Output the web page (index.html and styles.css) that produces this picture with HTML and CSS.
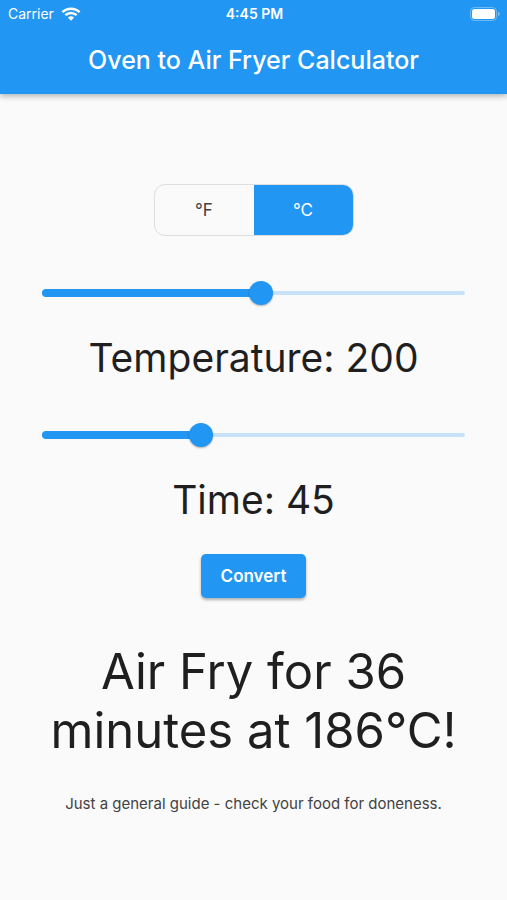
FILE: index.html
```html
<!DOCTYPE html>
<html lang="en">
<head>
    <meta charset="UTF-8">
    <meta name="viewport" content="width=device-width, initial-scale=1.0">
    <title>Oven to Air Fryer Calculator</title>
    <link rel="stylesheet" href="styles.css">
</head>
<body>

<header>
    <div class="status-bar">
        <div class="carrier">
            <span>Carrier</span>
            <svg width="20" height="14" viewBox="0 0 20 14" aria-hidden="true">
                <path d="M1.4 5.2a12.3 12.3 0 0 1 17.2 0M4.4 8.2a8 8 0 0 1 11.2 0" fill="none" stroke="#fff" stroke-width="2.5"/>
                <path d="M6.9 10.6a4.6 4.6 0 0 1 6.2 0L10 13.7z" fill="#fff"/>
            </svg>
        </div>
        <span class="clock">4:45 PM</span>
        <svg class="battery" width="31" height="14" viewBox="0 0 31 14" aria-hidden="true">
            <rect x="0.5" y="0.5" width="26" height="13" rx="4" fill="none" stroke="#fff" stroke-opacity="0.35"/>
            <rect x="2" y="2" width="23" height="10" rx="2.5" fill="#fff"/>
            <path d="M28 4.8v4.4q1.8-.6 1.8-2.2t-1.8-2.2z" fill="#fff" fill-opacity="0.4"/>
        </svg>
    </div>
    <h1>Oven to Air Fryer Calculator</h1>
</header>

<main>
    <div class="unit-toggle">
        <button type="button" data-unit="F" aria-pressed="false">°F</button>
        <button type="button" data-unit="C" aria-pressed="true">°C</button>
    </div>

    <div class="slider">
        <input type="range" id="temperature" min="93" max="300" value="200">
    </div>
    <label class="reading" for="temperature">Temperature: <span id="temperatureValue">200</span></label>

    <div class="slider">
        <input type="range" id="time" min="0" max="120" value="45">
    </div>
    <label class="reading" for="time">Time: <span id="timeValue">45</span></label>

    <button type="button" class="convert" id="convert">Convert</button>

    <h2 id="result">Air Fry for 36 minutes at 186°C!</h2>
    <p class="note">Just a general guide - check your food for doneness.</p>
</main>

<script src="script.js"></script>
</body>
</html>
```

FILE: styles.css
```css
* {
    box-sizing: border-box;
}

body {
    margin: 0;
    min-height: 100vh;
    background-color: #fafafa;
    font-family: Inter, "Liberation Sans", sans-serif;
    color: #1f1f1f;
}

button {
    font-family: inherit;
    border: none;
    cursor: pointer;
}

header {
    background-color: #2196f3;
    color: #fff;
    box-shadow: 0 2px 6px rgba(0, 0, 0, 0.3);
}

.status-bar {
    display: grid;
    grid-template-columns: 1fr auto 1fr;
    align-items: center;
    height: 27px;
    padding: 0 6px 0 8px;
    font-size: 14px;
}

.carrier {
    display: flex;
    align-items: center;
    gap: 7px;
}

.clock {
    font-weight: 600;
}

.battery {
    justify-self: end;
}

h1 {
    margin: 0;
    font-size: 25px;
    font-weight: 500;
    line-height: 67px;
    text-align: center;
}

main {
    display: flex;
    flex-direction: column;
    align-items: center;
    padding: 90px 42px 24px;
}

/* °F / °C switch */
.unit-toggle {
    display: flex;
    width: 200px;
    height: 52px;
    margin-bottom: 34px;
    border: 1px solid #dedede;
    border-radius: 11px;
    overflow: hidden;
}

.unit-toggle button {
    flex: 1;
    background-color: transparent;
    color: #424242;
    font-size: 17px;
}

.unit-toggle button[aria-pressed="true"] {
    background-color: #2196f3;
    color: #fff;
}

/* Sliders */
.slider {
    position: relative;
    width: 100%;
    height: 26px;
    margin-top: 10px;
}

.slider::before,
.slider::after {
    content: "";
    position: absolute;
    left: 0;
    border-radius: 4px;
}

.slider::before {
    top: 11px;
    width: 100%;
    height: 4px;
    background-color: #c7e2f8;
}

.slider::after {
    top: 9px;
    width: var(--fill);
    height: 8px;
    background-color: #2196f3;
}

.slider input {
    position: absolute;
    z-index: 1;
    top: 0;
    left: -10px;
    width: calc(100% + 20px);
    height: 26px;
    margin: 0;
    background: transparent;
    appearance: none;
    cursor: pointer;
}

.slider input::-webkit-slider-thumb {
    appearance: none;
    width: 24px;
    height: 24px;
    border-radius: 50%;
    background-color: #2196f3;
    box-shadow: 0 1px 2px rgba(0, 0, 0, 0.3);
}

.reading {
    margin: 24px 0 26px;
    font-size: 39px;
    line-height: 56px;
}

.convert {
    height: 44px;
    padding: 0 20px;
    border-radius: 5px;
    background-color: #2196f3;
    box-shadow: 0 2px 3px rgba(0, 0, 0, 0.3);
    color: #fff;
    font-size: 17px;
    font-weight: 600;
}

h2 {
    margin: 44px 0 34px;
    font-size: 49px;
    font-weight: 400;
    line-height: 59px;
    text-align: center;
}

.note {
    margin: 0;
    color: #424242;
    font-size: 15px;
    line-height: 20px;
    text-align: center;
}
```

FILE: script.js
```js
const temperature = document.getElementById('temperature');
const time = document.getElementById('time');
const unitButtons = document.querySelectorAll('.unit-toggle button');
const ranges = { C: [93, 300], F: [200, 572] };
let unit = 'C';

function updateSlider(input) {
    const ratio = (input.value - input.min) / (input.max - input.min);
    input.parentElement.style.setProperty('--fill', ratio * 100 + '%');
    document.getElementById(input.id + 'Value').textContent = input.value;
}

function setUnit(newUnit) {
    if (newUnit === unit) return;
    const degrees = Number(temperature.value);
    const converted = newUnit === 'F' ? degrees * 9 / 5 + 32 : (degrees - 32) * 5 / 9;
    unit = newUnit;
    temperature.min = ranges[unit][0];
    temperature.max = ranges[unit][1];
    temperature.value = Math.round(converted);
    unitButtons.forEach(button => {
        button.setAttribute('aria-pressed', button.dataset.unit === unit);
    });
    updateSlider(temperature);
}

// 20% less time, 25°F (14°C) cooler
function convert() {
    const minutes = Math.round(time.value * 0.8);
    const degrees = temperature.value - (unit === 'C' ? 14 : 25);
    document.getElementById('result').textContent =
        `Air Fry for ${minutes} minutes at ${degrees}°${unit}!`;
}

[temperature, time].forEach(input => {
    input.addEventListener('input', () => updateSlider(input));
    updateSlider(input);
});
unitButtons.forEach(button => {
    button.addEventListener('click', () => setUnit(button.dataset.unit));
});
document.getElementById('convert').addEventListener('click', convert);
```
